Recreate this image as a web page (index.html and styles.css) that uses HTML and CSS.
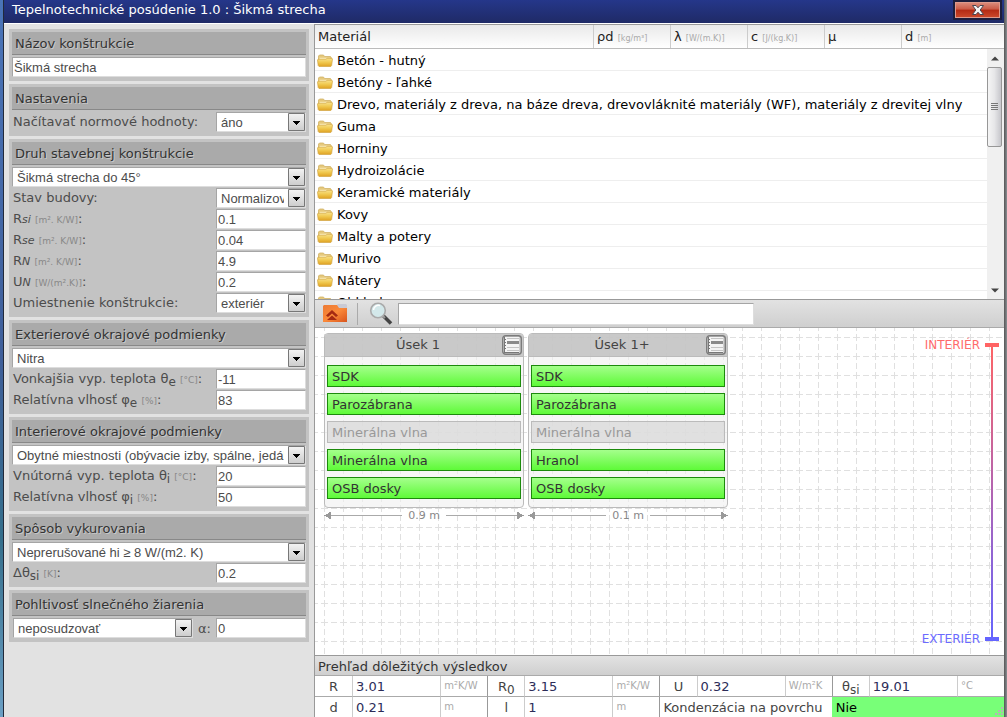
FILE: index.html
```html
<!DOCTYPE html>
<html lang="sk">
<head>
<meta charset="utf-8">
<title>Tepelnotechnické posúdenie 1.0 : Šikmá strecha</title>
<link rel="stylesheet" href="styles.css">
</head>
<body>
<svg class="defs" aria-hidden="true">
  <defs>
    <linearGradient id="gFolder" x1="0" y1="0" x2="0" y2="1"><stop offset="0" stop-color="#f8e28c"/><stop offset=".5" stop-color="#f0c84f"/><stop offset="1" stop-color="#dfa223"/></linearGradient>
    <linearGradient id="gOrange" x1="0" y1="0" x2="1" y2="1"><stop offset="0" stop-color="#ec7a34"/><stop offset=".5" stop-color="#fb8a3a"/><stop offset="1" stop-color="#d9541c"/></linearGradient>
    <symbol id="folder" viewBox="0 0 16 13">
      <path d="M1.500 10V2L2.500 1h4l1 1.500h6l.7 1V9z" fill="#e6c97c" stroke="#d0b268" stroke-width=".8"/>
      <path d="M2.500 3.800H13V7H2.500z" fill="#fdf3c4"/>
      <path d="M.5 6l.5-.8h8l1-.9h5l.5.6-.9 6.700-.8.9H2l-.8-.9z" fill="url(#gFolder)" stroke="#d2a543" stroke-width=".7"/>
    </symbol>
    <symbol id="layers" viewBox="0 0 20 20">
      <rect x=".7" y=".7" width="18.600" height="18.600" rx="3" fill="#cfcfcf" stroke="#7c7c7c" stroke-width="1.400"/>
      <path d="M3 2h14v16H3z" fill="#f4f4f4"/>
      <path d="M5 6h12v3H5z" fill="#8a8a8a"/>
      <path d="M5 3.500h12M5 12.500h12M5 15.500h12" stroke="#c4c4c4"/>
      <path d="M3 4.500h1M3 7.500h1M3 10.500h1M3 13.500h1M3 17.500h14M2.500 2v16" stroke="#777"/>
    </symbol>
  </defs>
</svg>
<div class="window">
  <header class="titlebar">
    <h1 class="title">Tepelnotechnické posúdenie 1.0 : Šikmá strecha</h1>
    <button class="close" type="button" aria-label="Zavrieť">
      <svg width="14" height="12" viewBox="0 0 14 12"><path d="M1.500 1.500h3.500l2 2.300 2-2.300h3.500L9.200 6l3.300 4.500H9L7 8.200 5 10.500H1.500L4.800 6z" fill="#f4f4f4" stroke="#4b4550" stroke-width="1"/></svg>
    </button>
  </header>
  <div class="content">
    <form class="sidebar">
      <section class="group">
        <h2 class="group-title"><label for="name">Názov konštrukcie</label></h2>
        <div class="row"><input class="field wide" id="name" value="Šikmá strecha"></div>
      </section>
      <section class="group">
        <h2 class="group-title">Nastavenia</h2>
        <div class="row"><label for="norm">Načítavať normové hodnoty:</label><select class="field" id="norm"><option>áno</option></select></div>
      </section>
      <section class="group">
        <h2 class="group-title"><label for="kind">Druh stavebnej konštrukcie</label></h2>
        <div class="row"><select class="field wide" id="kind"><option>Šikmá strecha do 45°</option></select></div>
        <div class="row"><label for="state">Stav budovy:</label><select class="field" id="state"><option>Normalizovaný</option></select></div>
        <div class="row"><label for="rsi">R<i>si</i> <small>[m². K/W]</small>:</label><input class="field" id="rsi" value="0.1"></div>
        <div class="row"><label for="rse">R<i>se</i> <small>[m². K/W]</small>:</label><input class="field" id="rse" value="0.04"></div>
        <div class="row"><label for="rn">R<i>N</i> <small>[m². K/W]</small>:</label><input class="field" id="rn" value="4.9"></div>
        <div class="row"><label for="un">U<i>N</i> <small>[W/(m².K)]</small>:</label><input class="field" id="un" value="0.2"></div>
        <div class="row"><label for="place">Umiestnenie konštrukcie:</label><select class="field" id="place"><option>exteriér</option></select></div>
      </section>
      <section class="group">
        <h2 class="group-title"><label for="city">Exterierové okrajové podmienky</label></h2>
        <div class="row"><select class="field wide" id="city"><option>Nitra</option></select></div>
        <div class="row"><label for="te">Vonkajšia vyp. teplota θ<sub>e</sub> <small>[°C]</small>:</label><input class="field" id="te" value="-11"></div>
        <div class="row"><label for="fe">Relatívna vlhosť φ<sub>e</sub> <small>[%]</small>:</label><input class="field" id="fe" value="83"></div>
      </section>
      <section class="group">
        <h2 class="group-title"><label for="room">Interierové okrajové podmienky</label></h2>
        <div class="row"><select class="field wide" id="room"><option>Obytné miestnosti (obývacie izby, spálne, jedálne)</option></select></div>
        <div class="row"><label for="ti">Vnútorná vyp. teplota θ<sub>i</sub> <small>[°C]</small>:</label><input class="field" id="ti" value="20"></div>
        <div class="row"><label for="fi">Relatívna vlhosť φ<sub>i</sub> <small>[%]</small>:</label><input class="field" id="fi" value="50"></div>
      </section>
      <section class="group">
        <h2 class="group-title"><label for="heat">Spôsob vykurovania</label></h2>
        <div class="row"><select class="field wide" id="heat"><option>Neprerušované hi ≥ 8 W/(m2. K)</option></select></div>
        <div class="row"><label for="dt">Δθ<sub>si</sub> <small>[K]</small>:</label><input class="field" id="dt" value="0.2"></div>
      </section>
      <section class="group">
        <h2 class="group-title"><label for="sun">Pohltivosť slnečného žiarenia</label></h2>
        <div class="row"><select class="field grow" id="sun"><option>neposudzovať</option></select><label class="alpha" for="alpha">α:</label><input class="field" id="alpha" value="0"></div>
      </section>
    </form>

    <main class="main">
      <div class="materials-head">
        <span class="c-name">Materiál</span><span class="c-val">ρd <small>[kg/m³]</small></span><span class="c-val">λ <small>[W/(m.K)]</small></span><span class="c-val">c <small>[J/(kg.K)]</small></span><span class="c-val">μ</span><span class="c-last">d <small>[m]</small></span>
      </div>
      <div class="materials">
        <ul class="list">
          <li><svg class="folder"><use href="#folder"/></svg>Betón - hutný</li>
          <li><svg class="folder"><use href="#folder"/></svg>Betóny - ľahké</li>
          <li><svg class="folder"><use href="#folder"/></svg>Drevo, materiály z dreva, na báze dreva, drevovláknité materiály (WF), materiály z drevitej vlny</li>
          <li><svg class="folder"><use href="#folder"/></svg>Guma</li>
          <li><svg class="folder"><use href="#folder"/></svg>Horniny</li>
          <li><svg class="folder"><use href="#folder"/></svg>Hydroizolácie</li>
          <li><svg class="folder"><use href="#folder"/></svg>Keramické materiály</li>
          <li><svg class="folder"><use href="#folder"/></svg>Kovy</li>
          <li><svg class="folder"><use href="#folder"/></svg>Malty a potery</li>
          <li><svg class="folder"><use href="#folder"/></svg>Murivo</li>
          <li><svg class="folder"><use href="#folder"/></svg>Nátery</li>
          <li><svg class="folder"><use href="#folder"/></svg>Obklady</li>
        </ul>
        <div class="scrollbar">
          <button class="sb-btn" type="button" aria-label="Hore"><svg width="8" height="5"><path d="M0 4.500L4 .5l4 4z" fill="#444"/></svg></button>
          <div class="sb-thumb"><svg width="8" height="9"><path d="M0 .5h7M0 2.500h7M0 4.500h7M0 6.500h7" stroke="#777"/></svg></div>
          <button class="sb-btn sb-down" type="button" aria-label="Dole"><svg width="8" height="5"><path d="M0 .5h8l-4 4z" fill="#444"/></svg></button>
        </div>
      </div>
      <div class="toolbar">
        <button class="tool" type="button" aria-label="O úroveň vyššie">
          <svg width="24" height="19" viewBox="0 0 24 19"><path d="M14 1l1-1h8l1 1v5H14z" fill="#c9cad4"/><path d="M0 2l1-1h13l2 3h8v14H0z" fill="url(#gOrange)"/><path d="M3 11.500l6-5.500 6 5.500-2 1.500-4-3.500L5 13z" fill="#a52a12"/><path d="M4 16l5-4.500 5 4.500z" fill="#a52a12"/></svg>
        </button>
        <span class="divider"></span>
        <label class="lens" for="search" aria-label="Hľadať">
          <svg width="24" height="24" viewBox="0 0 24 24"><path d="M14.500 14l7.500 7.500" stroke="#444" stroke-width="3.500"/><path d="M13 13l3 3" stroke="#999" stroke-width="2"/><circle cx="9" cy="8.500" r="7.300" fill="#d3e8ea" stroke="#aaa" stroke-width="1.600"/><path d="M4.500 8A5 5 0 0 1 11 3.500" fill="none" stroke="#fff" stroke-width="1.500"/></svg>
        </label>
        <input class="search" id="search" type="text">
      </div>
      <div class="canvas">
        <div class="sections">
          <section class="segment">
            <div class="box">
              <h3 class="seg-head"><span>Úsek 1</span><button class="seg-btn" type="button" aria-label="Vrstvy úseku 1"><svg width="20" height="20"><use href="#layers"/></svg></button></h3>
              <ul class="layers"><li>SDK</li><li>Parozábrana</li><li class="off">Minerálna vlna</li><li>Minerálna vlna</li><li>OSB dosky</li></ul>
            </div>
            <div class="dim"><span>0.9 m</span></div>
          </section>
          <section class="segment">
            <div class="box">
              <h3 class="seg-head"><span>Úsek 1+</span><button class="seg-btn" type="button" aria-label="Vrstvy úseku 1+"><svg width="20" height="20"><use href="#layers"/></svg></button></h3>
              <ul class="layers"><li>SDK</li><li>Parozábrana</li><li class="off">Minerálna vlna</li><li>Hranol</li><li>OSB dosky</li></ul>
            </div>
            <div class="dim"><span>0.1 m</span></div>
          </section>
        </div>
        <div class="axis">
          <div class="axis-labels"><span class="inside">INTERIÉR</span><span class="outside">EXTERIÉR</span></div>
          <div class="axis-line"></div>
        </div>
      </div>
      <h2 class="results-title">Prehľad dôležitých výsledkov</h2>
      <table class="results">
        <colgroup><col class="k"><col class="v"><col class="u"><col class="k"><col class="v"><col class="u"><col class="k"><col class="v"><col class="u"><col class="k"><col class="v"><col class="u"></colgroup>
        <tr><th>R</th><td>3.01</td><td class="unit">m²K/W</td><th>R<sub>0</sub></th><td>3.15</td><td class="unit">m²K/W</td><th>U</th><td>0.32</td><td class="unit">W/m²K</td><th>θ<sub>si</sub></th><td>19.01</td><td class="unit">°C</td></tr>
        <tr><th>d</th><td>0.21</td><td class="unit">m</td><th>l</th><td>1</td><td class="unit">m</td><th colspan="3" class="cond">Kondenzácia na povrchu</th><td colspan="3" class="ok">Nie<svg class="grip" width="9" height="9"><path d="M7 0h2v2H7zM4 3h2v2H4zM7 3h2v2H7zM1 6h2v2H1zM4 6h2v2H4zM7 6h2v2H7z" fill="#b5b5b5"/></svg></td></tr>
      </table>
    </main>
  </div>
</div>
</body>
</html>
```
FILE: styles.css
```css
* { box-sizing: border-box; }

body {
  margin: 0;
  height: 100vh;
  overflow: hidden;
  padding: 0 3px 0 4px;
  background:
    linear-gradient(#222a3a, #222a3a) 3px 0 / 1px 100% no-repeat,
    linear-gradient(90deg, #555, #8a8f93) right / 3px 100% no-repeat,
    linear-gradient(#4a74b8, #3f5f9a 50%, #356f8c 75%, #6b9fc4);
  font: 13px/20px Verdana, "DejaVu Sans", sans-serif;
  color: #444;
}
h1, h2, h3, ul { margin: 0; padding: 0; font: inherit; list-style: none; }
button { margin: 0; padding: 0; border: 0; background: none; }
svg { display: block; }
.defs { position: absolute; width: 0; height: 0; }

.window { display: flex; flex-direction: column; height: 100%; background: #e2e2e2; }
.titlebar {
  display: flex;
  justify-content: space-between;
  height: 24px;
  padding: 0 2px 0 8px;
  border-bottom: 1px solid #fff;
  background: linear-gradient(#25378a, #1f2a66);
}
.title { color: #fff; }
.close {
  display: grid;
  place-items: center;
  width: 49px;
  height: 20px;
  border: 2px solid #1c1d3c;
  outline: 0;
  background: linear-gradient(#dd9080, #cb5a46 45%, #b22a14 50%, #cc4a2c);
  box-shadow: inset 0 0 0 1px #dd9a8c;
}
.content { display: flex; flex: 1; min-height: 0; }

/* form column */
.sidebar { display: flex; flex-direction: column; gap: 3px; width: 310px; flex: none; padding: 5px; }
.group { padding: 3px; background: #c3c3c3; }
.group-title {
  height: 23px;
  margin-bottom: 2px;
  padding: 2px 3px 0;
  border-bottom: 1px solid #888;
  background: #aaa;
  color: #333;
  text-shadow: 1px 1px 0 #c8c8c8;
  line-height: 19px;
}
.row { display: flex; justify-content: space-between; height: 21px; }
.row label { padding-left: 1px; line-height: 19px; color: #4c4c4c; white-space: nowrap; }
.row label.alpha { padding: 0 5px; line-height: 21px; }
.row i { font-size: 11px; }
small { font-size: 9px; color: #888; }
sub { font-size: 12px; line-height: 0; vertical-align: -3px; }
.field {
  width: 90px;
  height: 20px;
  margin: 0;
  padding: 0 1px;
  border: 1px solid;
  border-color: #a5a5a5 #ddd #ddd #a5a5a5;
  border-radius: 0;
  outline: 0;
  background: #fff;
  color: #4c4c4c;
  font: 13px "Liberation Sans", Arial, sans-serif;
}
select.field {
  appearance: none;
  padding: 0 21px 0 4px;
  background: #fff url("data:image/svg+xml,%3Csvg xmlns='http://www.w3.org/2000/svg' width='17' height='18'%3E%3ClinearGradient id='a' x2='0' y2='1'%3E%3Cstop stop-color='%23f4f4f4'/%3E%3Cstop offset='1' stop-color='%23ccc'/%3E%3C/linearGradient%3E%3Cpath d='M.5.5h16v17H.5z' fill='url(%23a)' stroke='%23777'/%3E%3Cpath d='M5 8h7v1h-1v1h-1v1H9v1H8v-1H7v-1H6V9H5z'/%3E%3C/svg%3E") right center no-repeat;
}
.wide { width: 100%; }
.grow { flex: 1; margin-left: 1px; }

/* material list */
.main { display: flex; flex-direction: column; flex: 1; min-width: 0; border-left: 1px solid #999; background: #fff; }
.materials-head {
  display: flex;
  height: 25px;
  border-top: 1px solid #999;
  border-bottom: 1px solid #bbb;
  background: linear-gradient(#e9e9e9, #fff);
  color: #222;
  line-height: 23px;
}
.materials-head span { padding-left: 3px; white-space: nowrap; }
.materials-head small { font-size: 8px; color: #aaa; }
.materials-head .c-name { flex: 1; }
.materials-head .c-val { width: 77px; border-left: 1px solid #ccc; }
.materials-head .c-last { width: 103px; border-left: 1px solid #ccc; }
.materials { display: flex; height: 250px; overflow: hidden; }
.list { flex: 1; min-width: 0; color: #000; }
.list li {
  display: flex;
  align-items: center;
  gap: 4px;
  height: 22px;
  padding: 2px 0 0 2px;
  border-bottom: 1px solid #eee;
  white-space: nowrap;
}
.folder { width: 16px; height: 13px; flex: none; }
.scrollbar {
  display: flex;
  flex-direction: column;
  width: 17px;
  padding-right: 2px;
  background: #f0f0f0;
}
.sb-btn { display: grid; place-items: center; height: 18px; }
.sb-down { margin-top: auto; }
.sb-thumb {
  display: grid;
  place-items: center;
  height: 80px;
  border: 1px solid #979797;
  border-radius: 2px;
  background: linear-gradient(90deg, #f5f5f5, #e6e6e8 50%, #c6c6cb);
}

.toolbar {
  display: flex;
  align-items: center;
  height: 29px;
  padding: 0 8px;
  border-top: 1px solid #999;
  border-bottom: 1px solid #aaa;
  background: linear-gradient(#e2e2e2, #cfcfcf);
}
.divider { width: 1px; height: 22px; margin: 0 11px 0 10px; background: #aaa; }
.search {
  width: 356px;
  height: 22px;
  margin-left: 5px;
  border: 1px solid;
  border-color: #a5a5a5 #ddd #ddd #a5a5a5;
  outline: 0;
  background: #fff;
}

/* construction drawing */
.canvas {
  display: flex;
  justify-content: space-between;
  flex: 1;
  min-height: 0;
  padding: 5px 5px 14px 9px;
  background: #fff url("data:image/svg+xml,%3Csvg xmlns='http://www.w3.org/2000/svg' width='19' height='19'%3E%3Cpath d='M0 9.500h3M6 9.500h7M16 9.500h3M9.500 0v3M9.500 6v7M9.500 16v3' stroke='%23e0e0e0'/%3E%3C/svg%3E");
}
.sections { display: flex; gap: 4px; }
.segment { width: 200px; }
.box { border: 1px solid #bbb; border-radius: 4px; background: rgba(240, 240, 240, .6); overflow: hidden; }
.seg-head {
  display: grid;
  grid-template-columns: 1fr 20px;
  align-items: center;
  height: 23px;
  padding: 0 1px 0 9px;
  background: rgba(190, 190, 190, .8);
  border-bottom: 1px solid #bbb;
  line-height: 22px;
  text-align: center;
}
.layers { display: grid; gap: 6px; padding: 8px 2px; }
.layers li {
  height: 22px;
  padding-left: 4px;
  border: 1px solid #1c8a0c;
  background: linear-gradient(#a4ff8c, #5efa38);
  color: #333;
  line-height: 22px;
}
.layers .off { border-color: #bbb; background: rgba(215, 215, 215, .7); color: #999; }
.dim { display: flex; align-items: center; gap: 6px; height: 15px; color: #888; font-size: 11px; line-height: 15px; }
.dim::before, .dim::after { content: ""; flex: 1; height: 7px; }
.dim::before {
  background:
    conic-gradient(from 61deg at 0 50%, #999 58deg, transparent 0) left / 7px 7px no-repeat,
    linear-gradient(#aaa, #aaa) center / 100% 1px no-repeat;
}
.dim::after {
  background:
    conic-gradient(from 241deg at 100% 50%, #999 58deg, transparent 0) right / 7px 7px no-repeat,
    linear-gradient(#aaa, #aaa) center / 100% 1px no-repeat;
}
.axis { display: flex; gap: 5px; padding-top: 10px; }
.axis-labels {
  display: flex;
  flex-direction: column;
  justify-content: space-between;
  margin: -4px 0;
  font-size: 12px;
  line-height: 12px;
  text-align: right;
}
.inside { color: #ff6b6b; }
.outside { color: #6b6bff; }
.axis-line {
  width: 14px;
  background:
    linear-gradient(#ff6464, #ff6464) top / 100% 4px no-repeat,
    linear-gradient(#6464ff, #6464ff) bottom / 100% 4px no-repeat,
    linear-gradient(#ff6464, #6464ff) center / 2px 100% no-repeat;
}

/* results */
.results-title {
  height: 21px;
  padding-left: 3px;
  border-top: 1px solid #999;
  border-bottom: 1px solid #aaa;
  background: linear-gradient(#e2e2e2, #cfcfcf);
  color: #333;
  line-height: 21px;
}
.results { width: 100%; table-layout: fixed; border-collapse: separate; border-spacing: 0; color: #2c2c58; }
.k { width: 37px; }
.v { width: 88px; }
.u { width: 47px; }
.results th, .results td { height: 21px; padding: 2px 0 0; border-bottom: 1px solid #aaa; line-height: 18px; font-weight: 400; white-space: nowrap; vertical-align: middle; }
.results tr:last-child > * { height: 20px; border-bottom: 0; }
.results th { color: #444; text-align: center; }
.results td { padding-left: 3px; border-left: 1px solid #ccc; text-align: left; }
.results th:not(:first-child) { border-left: 1px solid #999; }
.results .unit { color: #aaa; font-size: 10px; line-height: 16px; vertical-align: top; }
.results .cond { text-align: left; padding-left: 3px; }
.results td.ok { position: relative; border-color: #78ff78; background: #78ff78; color: #000; }
.grip { position: absolute; right: 1px; bottom: 1px; }
```
